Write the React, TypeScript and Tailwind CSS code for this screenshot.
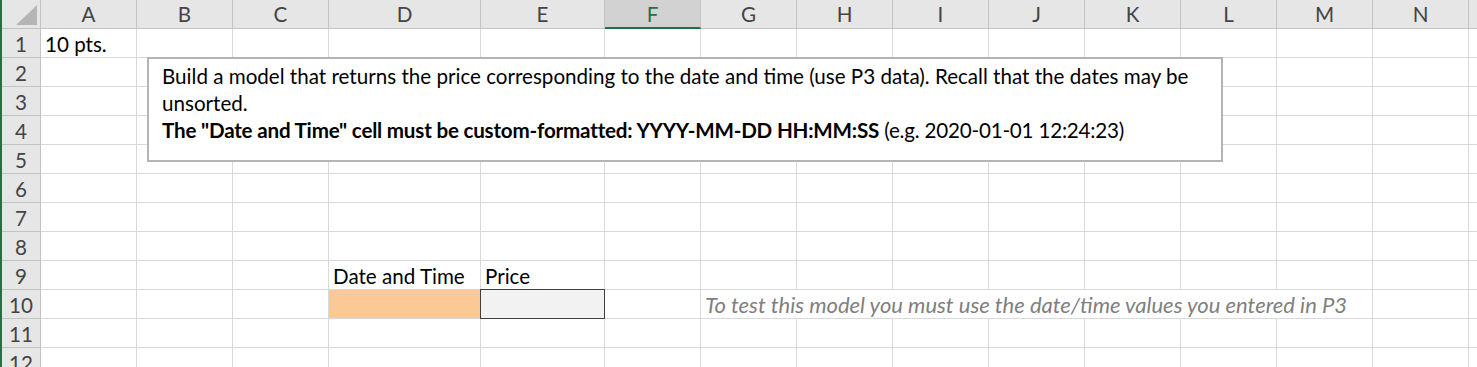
import React from "react";

const cols = ["A", "B", "C", "D", "E", "F", "G", "H", "I", "J", "K", "L", "M", "N", ""];
const rows = [1, 2, 3, 4, 5, 6, 7, 8, 9, 10, 11, 12];

const cell = "border-r border-b border-[#d9d9d9] flex items-end px-[4px] pb-[3px] leading-[20px] whitespace-nowrap";
const head = "bg-[#e6e6e6] border-r border-b border-[#c3c3c3] flex items-center justify-center text-[#444] pt-[1px]";

function Corner() {
  return (
    <div className="bg-[#e6e6e6] border-r border-b border-[#c3c3c3] relative">
      <svg className="absolute right-[3px] bottom-[3px]" width="21" height="20" viewBox="0 0 21 20">
        <polygon points="21,0 21,20 0,20" fill="#b5b5b5" />
      </svg>
    </div>
  );
}

function Row({ n }: { n: number }) {
  const content: React.ReactNode[] = [];
  content.push(
    <div key="h" className={`${head} pt-[2px]`}>
      {n}
    </div>,
  );
  let i = 0;
  while (i < cols.length) {
    const key = `${n}-${i}`;
    if (n === 1 && i === 0) {
      content.push(
        <div key={key} className={cell}>
          10 pts.
        </div>,
      );
    } else if (n === 9 && i === 3) {
      content.push(
        <div key={key} className={cell}>
          Date and Time
        </div>,
      );
    } else if (n === 9 && i === 4) {
      content.push(
        <div key={key} className={cell}>
          Price
        </div>,
      );
    } else if (n === 10 && i === 3) {
      content.push(<div key={key} className="bg-[#fbc995] border-b border-[#d9d9d9]" />);
    } else if (n === 10 && i === 4) {
      content.push(
        <div key={key} className="bg-[#f2f2f2] border border-[#3f3f3f] -mt-px -ml-px" />,
      );
    } else if (n === 10 && i === 6) {
      content.push(
        <div key={key} className={`${cell} col-span-7 italic text-[22px] text-[#7f7f7f]`}>
          To test this model you must use the date/time values you entered in P3
        </div>,
      );
      i += 7;
      continue;
    } else {
      content.push(<div key={key} className={cell} />);
    }
    i++;
  }
  return <>{content}</>;
}

export default function App() {
  return (
    <div
      className="relative h-[367px] w-[1477px] overflow-hidden bg-white border-l-2 border-[#217346] text-[20.6px] text-black"
      style={{ fontFamily: "Lato, 'Liberation Sans', sans-serif" }}
    >
      <div className="grid grid-cols-[39px_96px_96px_96px_152px_124px_96px_96px_96px_96px_96px_96px_96px_96px_96px_1fr] auto-rows-[29px]">
        <Corner />
        {cols.map((c, i) =>
          c === "F" ? (
            <div
              key={i}
              className="bg-[#d2d2d2] border-r border-b-2 border-r-[#c3c3c3] border-b-[#217346] flex items-center justify-center text-[#217346] pt-[2px]"
            >
              {c}
            </div>
          ) : (
            <div key={i} className={head}>
              {c}
            </div>
          ),
        )}
        {rows.map((n) => (
          <Row key={n} n={n} />
        ))}
      </div>

      <div className="absolute left-[145px] top-[57px] w-[1076px] h-[105px] bg-white border-2 border-[#b4b4b4] pl-[13px] pt-[4px] leading-[27px] whitespace-nowrap">
        <div>
          Build a model that returns the price corresponding to the date and time (use P3 data). Recall that the dates may be
        </div>
        <div>unsorted.</div>
        <div className="tracking-[-0.2px]">
          <span className="font-bold">The "Date and Time" cell must be custom-formatted: YYYY-MM-DD HH:MM:SS</span> (e.g.
          2020-01-01 12:24:23)
        </div>
      </div>
    </div>
  );
}
